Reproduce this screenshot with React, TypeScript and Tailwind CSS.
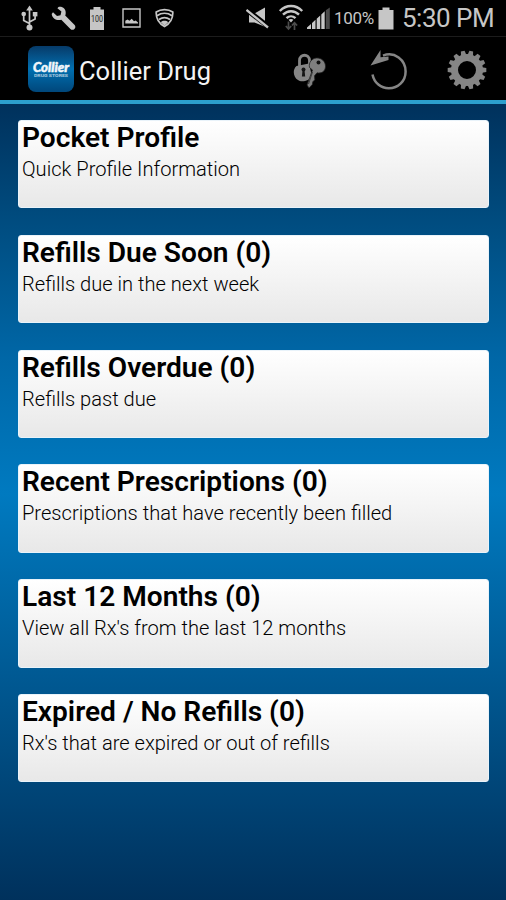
type MenuItem = { title: string; subtitle: string };

const items: MenuItem[] = [
  { title: 'Pocket Profile', subtitle: 'Quick Profile Information' },
  { title: 'Refills Due Soon (0)', subtitle: 'Refills due in the next week' },
  { title: 'Refills Overdue (0)', subtitle: 'Refills past due' },
  { title: 'Recent Prescriptions (0)', subtitle: 'Prescriptions that have recently been filled' },
  { title: 'Last 12 Months (0)', subtitle: "View all Rx's from the last 12 months" },
  { title: 'Expired / No Refills (0)', subtitle: "Rx's that are expired or out of refills" },
];

function StatusBar() {
  return (
    <div className="flex h-[36px] items-center bg-black text-[#c6c6c6]">
      <svg className="ml-[21px] shrink-0" width="17" height="26" viewBox="0 0 17 26" fill="none" stroke="currentColor" strokeWidth="1.7">
        <path d="M8.5 3v19M8.5 18.5 2.7 15.500V9M8.5 17l5.600-3V9" />
        <path d="M8.5 .5 5.2 5.500h6.600z" fill="currentColor" stroke="none" />
        <circle cx="8.5" cy="22.400" r="3" fill="currentColor" stroke="none" />
        <circle cx="2.700" cy="9" r="2.300" fill="currentColor" stroke="none" />
        <path d="M11.800 7h4.600v4.400h-4.600z" fill="currentColor" stroke="none" />
      </svg>
      <svg className="ml-[13px] shrink-0" width="25" height="25" viewBox="0 0 25 25" fill="currentColor">
        <path d="M7.5 1C11.600.2 15 3.200 14.700 7c0 1.100-.2 1.800-.5 2.500l9.200 9.300c1.300 1.400 1.300 3.100 0 4.200-1.200 1.200-2.900 1.100-4-.1l-9.100-9.200C6.100 15 1 12.600.7 8L2 6.300l4 3.700 3.500-.8.9-3.600-4-3.400z" />
      </svg>
      <svg className="ml-[13px] shrink-0" width="16" height="25" viewBox="0 0 16 25">
        <path d="M4.500 1h7v2.500H15V24H1V3.500h3.500z" fill="#c6c6c6" />
        <text x="8" y="16" textAnchor="middle" fontFamily="Roboto, sans-serif" fontSize="9" fontWeight="400" textLength="12" lengthAdjust="spacingAndGlyphs" fill="#222">100</text>
      </svg>
      <svg className="ml-[17px] shrink-0" width="19" height="20" viewBox="0 0 19 20" fill="none" stroke="currentColor" strokeWidth="1.400">
        <path d="M1 1h17v18H1z" />
        <path d="M3.300 15.500v-2.800l2.200-1.300 2 1.300 2.200-2 2.300 2.600 1.700-.8 2.300 2v1z" fill="currentColor" stroke="none" />
      </svg>
      <svg className="ml-[14px] shrink-0" width="19" height="20" viewBox="0 0 19 20" fill="none" stroke="currentColor" strokeWidth="1.700">
        <path d="M1.200 4C6 .7 13 .7 17.800 4c.3 6.200-2.700 11.500-8.300 14.500C3.900 15.500.9 10.200 1.200 4z" />
        <path d="M2 7.700c4.500-3 10.500-3 15 0M4 11.500c3.300-2.300 7.700-2.300 11 0" />
        <path d="M5.800 14.200c2-1.800 5.400-1.800 7.400 0l-3.700 3.600z" fill="currentColor" stroke="none" />
      </svg>
      <svg className="ml-[72px] shrink-0" width="25" height="22" viewBox="0 0 25 22">
        <path d="M3 6.500h5.500L19 .5v19.200L8.500 15.500H3z" fill="#c6c6c6" />
        <path d="M1 3 23.500 20.500" stroke="#000" strokeWidth="5" />
        <path d="M.500 3 22 20.500" stroke="#c6c6c6" strokeWidth="2.300" />
      </svg>
      <svg className="ml-[7px] mt-[-2px] shrink-0" width="26" height="27" viewBox="0 0 26 27" fill="none" stroke="currentColor" strokeWidth="2.400">
        <path d="M1.800 7C8.300.4 17.700.4 24.200 7M5 10.700c4.700-4.600 11.300-4.600 16 0M8.500 14.200c2.700-2.500 6.300-2.500 9 0" />
        <path d="m10.600 15.800 2.400 2.600 2.400-2.600c-1.400-1.200-3.400-1.200-4.800 0z" fill="currentColor" stroke="none" />
        <path d="M10.500 17.500v7M7.800 22l2.700 3 2.700-3M16.500 26v-7M13.900 21.500l2.600-2.800 2.600 2.800" stroke="#4b4b4b" strokeWidth="1.700" />
      </svg>
      <svg className="ml-[3px] shrink-0" width="24" height="23" viewBox="0 0 24 23">
        <path d="M0 22v-1.500l4-3.500v5zM5 22v-6l3.500-3.200V22zM9.700 22V11.700l3.500-3.200V22zM14.300 22V7.500L17.700 4.300V22z" fill="#c6c6c6" />
        <path d="M18.800 22V3.300L22.800.5V22z" fill="#4a4a4a" />
      </svg>
      <span className="ml-[3px] w-[41px] whitespace-nowrap text-[17px] leading-none tracking-[-0.3px]">100%</span>
      <svg className="ml-[3px] shrink-0" width="16" height="23" viewBox="0 0 16 23" fill="currentColor">
        <path d="M4.500 .5h7V3h4v19.500H.5V3h4z" />
      </svg>
      <span className="ml-[8px] whitespace-nowrap text-[26px] leading-none tracking-[-0.500px]">5:30 PM</span>
    </div>
  );
}

function KeysIcon() {
  return (
    <svg width="33" height="38" viewBox="0 0 33 38">
      <path d="M6.500 15V8.500c0-7 10-7 10 0V15" fill="none" stroke="#858585" strokeWidth="2.800" />
      <path d="M3.500 14 16 11.500l3 13c-2.500 4.500-11 6-14 3.500C.5 25.500-1 18 3.500 14z" fill="#858585" />
      <circle cx="10.500" cy="17.500" r="2" fill="#151515" />
      <path d="M9.500 18h2l.7 6.500H8.900z" fill="#151515" />
      <path d="M19.500 18 16.500 15.500c-1-5 2-9 7-9.500 5-.4 9 3.500 9 8.300 0 5-4 7.500-8.500 6.500l-2.500 3 .3 4-2 2-.5 2.700-3.300 3.500-2-3z" fill="#7f7f7f" stroke="#222" strokeWidth=".8" />
      <circle cx="25.500" cy="10.500" r="2" fill="#111" />
      <path d="m19.500 20-4 12" stroke="#333" strokeWidth=".9" />
    </svg>
  );
}

function RefreshIcon() {
  return (
    <svg width="38" height="42" viewBox="0 0 38 42">
      <path d="M13 5.600C24.500 1 35.600 10 35.600 21.500c0 9.500-7.200 16.800-16.800 16.800C11 38.300 4.200 33 2.500 24.500" fill="none" stroke="#858585" strokeWidth="2.500" />
      <path d="M10.500 0 .5 15.400l18-5.400V6.500l-8 .7z" fill="#858585" />
    </svg>
  );
}

function GearIcon() {
  const teeth = Array.from({ length: 14 }, (_, i) => (i * 360) / 14);
  return (
    <svg width="40" height="40" viewBox="-20 -20 40 40">
      <circle r="12.500" fill="none" stroke="#858585" strokeWidth="7" />
      {teeth.map((angle) => (
        <path key={angle} d="M-2.700-15-1.900-19.300H1.900L2.700-15z" fill="#858585" transform={`rotate(${angle + 12.86})`} />
      ))}
    </svg>
  );
}

function Logo() {
  return (
    <div className="flex h-[46px] w-[46px] shrink-0 flex-col items-center justify-center rounded-[8px] bg-linear-to-b from-[#063b69] via-[#006fb0] to-[#00477b] text-[#f2f6fa]">
      <svg width="38" height="13" viewBox="0 0 38 13" fill="currentColor" stroke="currentColor" strokeWidth=".5">
        <text x="1" y="11.500" fontFamily="Lato, sans-serif" fontSize="13" fontWeight="900" fontStyle="italic" textLength="36" lengthAdjust="spacingAndGlyphs">Collier</text>
      </svg>
      <svg className="mt-[1px]" width="38" height="4" viewBox="0 0 38 4" fill="currentColor">
        <text x="2" y="3" fontFamily="Roboto, sans-serif" fontSize="3" fontWeight="700" textLength="34" lengthAdjust="spacingAndGlyphs" opacity=".7">DRUG STORES</text>
      </svg>
    </div>
  );
}

function ActionBar() {
  return (
    <header className="flex h-[68px] items-start border-t border-b-4 border-t-[#1c1c1c] border-b-[#2c9fcd] bg-black">
      <div className="ml-[28px] mt-[9px]">
        <Logo />
      </div>
      <h1 className="ml-[5px] mt-[17px] w-[138px] whitespace-nowrap text-[25.500px] leading-[34px] text-[#f3f3f3]">Collier Drug</h1>
      <button className="ml-[76px] mt-[15px]"><KeysIcon /></button>
      <button className="ml-[44px] mt-[13px]"><RefreshIcon /></button>
      <button className="ml-[39px] mt-[13px]"><GearIcon /></button>
    </header>
  );
}

export default function App() {
  return (
    <div className="flex h-[900px] w-[506px] flex-col overflow-hidden bg-black font-[Roboto,sans-serif]">
      <StatusBar />
      <ActionBar />
      <main className="flex flex-1 flex-col gap-[26.400px] bg-[linear-gradient(#00315c_0%,#004b7e_14%,#0067a7_32%,#007ac0_49%,#00315c_100%)] px-[17.500px] pt-[16px]">
        {items.map((item) => (
          <section
            key={item.title}
            className="h-[88.400px] rounded-[3px] border border-[#e9f3fa] bg-linear-to-b from-white to-[#e8e8e8] px-[3.500px]"
          >
            <h2 className="whitespace-nowrap text-[28.100px] font-semibold leading-[33px] text-black">{item.title}</h2>
            <p className="whitespace-nowrap text-[20.100px] font-light leading-[31px] text-black">{item.subtitle}</p>
          </section>
        ))}
      </main>
    </div>
  );
}
